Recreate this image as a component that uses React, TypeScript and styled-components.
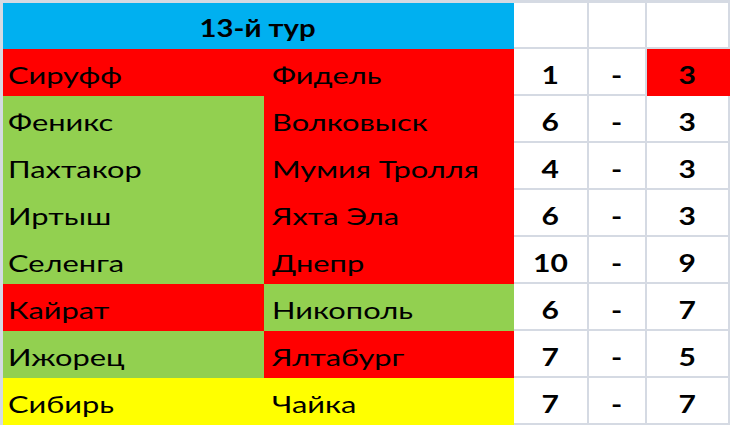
import React from "react";
import styled, { createGlobalStyle } from "styled-components";

const GRID = "#d5dae3";
const FILL: Record<string, string> = {
  b: "#00b0f0",
  r: "#ff0000",
  g: "#92d050",
  y: "#ffff00",
  w: "#ffffff",
};

const Global = createGlobalStyle`
  html, body { margin: 0; padding: 0; background: #ffffff; }
  body { width: 730px; height: 426px; overflow: hidden; }
`;

const Table = styled.div`
  display: grid;
  grid-template-columns: 261px 250px 75px 58px 83px;
  grid-template-rows: 46px repeat(8, 47px);
  width: 727px;
  border-top: 3px solid ${GRID};
  border-left: 3px solid ${GRID};
  font-family: Lato, "Open Sans", "Noto Sans", sans-serif;
  color: #000;
`;

const Cell = styled.div<{ $fill: string; $span?: number; $center?: boolean; $pad?: number }>`
  grid-column: span ${(p) => p.$span ?? 1};
  background: ${(p) => FILL[p.$fill]};
  border-right: 2px solid ${(p) => (p.$fill === "w" ? GRID : FILL[p.$fill])};
  border-bottom: 2px solid ${(p) => (p.$fill === "w" ? GRID : FILL[p.$fill])};
  display: flex;
  align-items: flex-end;
  justify-content: ${(p) => (p.$center ? "center" : "flex-start")};
  padding: 0 0 7px ${(p) => p.$pad ?? 0}px;
  box-sizing: border-box;
  white-space: nowrap;
  overflow: hidden;
`;

const Name = styled.span`
  display: inline-block;
  font-size: 23px;
  font-weight: 400;
  line-height: 1;
  transform: scaleX(1.34);
  transform-origin: left bottom;
`;

const Bold = styled.span<{ $size?: number; $stretch?: number }>`
  display: inline-block;
  font-size: ${(p) => p.$size ?? 25}px;
  font-weight: 700;
  line-height: 1;
  transform: scaleX(${(p) => p.$stretch ?? 1.2});
  transform-origin: center bottom;
`;

type Row = { home: string; away: string; hc: string; ac: string; h: string; a: string; sc?: string };

const rows: Row[] = [
  { home: "Сируфф", away: "Фидель", hc: "r", ac: "r", h: "1", a: "3", sc: "r" },
  { home: "Феникс", away: "Волковыск", hc: "g", ac: "r", h: "6", a: "3" },
  { home: "Пахтакор", away: "Мумия Тролля", hc: "g", ac: "r", h: "4", a: "3" },
  { home: "Иртыш", away: "Яхта Эла", hc: "g", ac: "r", h: "6", a: "3" },
  { home: "Селенга", away: "Днепр", hc: "g", ac: "r", h: "10", a: "9" },
  { home: "Кайрат", away: "Никополь", hc: "r", ac: "g", h: "6", a: "7" },
  { home: "Ижорец", away: "Ялтабург", hc: "g", ac: "r", h: "7", a: "5" },
  { home: "Сибирь", away: "Чайка", hc: "y", ac: "y", h: "7", a: "7" },
];

export default function App() {
  return (
    <>
      <Global />
      <Table>
        <Cell $fill="b" $span={2} $center>
          <Bold $size={24} $stretch={1.22}>13-й тур</Bold>
        </Cell>
        <Cell $fill="w" />
        <Cell $fill="w" />
        <Cell $fill="w" />
        {rows.map((r) => (
          <React.Fragment key={r.home}>
            <Cell $fill={r.hc} $pad={5}>
              <Name>{r.home}</Name>
            </Cell>
            <Cell $fill={r.ac} $pad={8}>
              <Name>{r.away}</Name>
            </Cell>
            <Cell $fill="w" $center>
              <Bold>{r.h}</Bold>
            </Cell>
            <Cell $fill="w" $center>
              <Bold>-</Bold>
            </Cell>
            <Cell $fill={r.sc ?? "w"} $center>
              <Bold>{r.a}</Bold>
            </Cell>
          </React.Fragment>
        ))}
      </Table>
    </>
  );
}
